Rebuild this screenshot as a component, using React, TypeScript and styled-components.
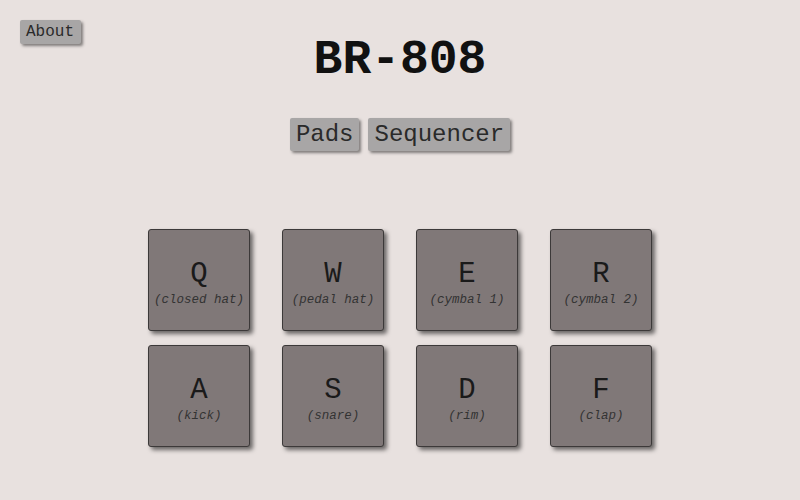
import React from 'react';
import styled, { createGlobalStyle } from 'styled-components';

const GlobalStyle = createGlobalStyle`
	html, body {
		margin: 0;
		padding: 0;
		background: #e8e1df;
		font-family: "Liberation Mono", "Courier New", monospace;
	}
`

type PadType = {
	key: string
	label: string
}

const pads: PadType[] = [
	{ key: 'Q', label: 'closed hat' },
	{ key: 'W', label: 'pedal hat' },
	{ key: 'E', label: 'cymbal 1' },
	{ key: 'R', label: 'cymbal 2' },
	{ key: 'A', label: 'kick' },
	{ key: 'S', label: 'snare' },
	{ key: 'D', label: 'rim' },
	{ key: 'F', label: 'clap' },
]

export default function App() {
	return (
		<Page>
			<GlobalStyle />
			<Header>
				<AboutButton>About</AboutButton>
				<Title>BR-808</Title>
			</Header>
			<Tabs>
				<TabButton>Pads</TabButton>
				<TabButton>Sequencer</TabButton>
			</Tabs>
			<PadGrid>
				{pads.map(p => (
					<Pad key={p.key}>
						<PadKey>{p.key}</PadKey>
						<PadLabel>({p.label})</PadLabel>
					</Pad>
				))}
			</PadGrid>
		</Page>
	)
}

const Page = styled.div`
	width: 800px;
	height: 500px;
	padding: 20px;
	box-sizing: border-box;
	display: flex;
	flex-direction: column;
	align-items: center;
`

const Header = styled.header`
	width: 100%;
	display: grid;
	grid-template-columns: 1fr auto 1fr;
	align-items: start;
`

const AboutButton = styled.button`
	justify-self: start;
	font-family: inherit;
	font-size: 16px;
	color: #2a2a2a;
	background: #a8a6a6;
	border: none;
	border-radius: 2px;
	padding: 2px 7px 2px 6px;
	height: 24px;
	box-shadow: 2px 2px 3px rgba(0, 0, 0, 0.45);
	cursor: pointer;
`

const Title = styled.h1`
	margin: 13px 0 0;
	font-size: 48px;
	font-weight: 700;
	line-height: 54px;
	color: #111;
`

const Tabs = styled.nav`
	display: flex;
	gap: 9px;
	margin-top: 31px;
`

const TabButton = styled.button`
	font-family: inherit;
	font-size: 24px;
	color: #2a2a2a;
	background: #a8a6a6;
	border: none;
	border-radius: 2px;
	height: 33px;
	padding: 0 6px;
	box-shadow: 2px 2px 3px rgba(0, 0, 0, 0.45);
	cursor: pointer;
`

const PadGrid = styled.div`
	display: grid;
	grid-template-columns: repeat(4, 102px);
	column-gap: 32px;
	row-gap: 14px;
	margin-top: 78px;
`

const Pad = styled.div`
	width: 102px;
	height: 102px;
	box-sizing: border-box;
	background: #807878;
	border: 1px solid #3c3939;
	border-radius: 3px;
	box-shadow: 3px 3px 4px rgba(0, 0, 0, 0.55);
	display: flex;
	flex-direction: column;
	align-items: center;
	justify-content: center;
	padding-top: 6px;
`

const PadKey = styled.div`
	font-size: 29px;
	line-height: 30px;
	color: #1a1a1a;
`

const PadLabel = styled.div`
	font-size: 12.5px;
	font-style: italic;
	color: #333;
	margin-top: 3px;
`
